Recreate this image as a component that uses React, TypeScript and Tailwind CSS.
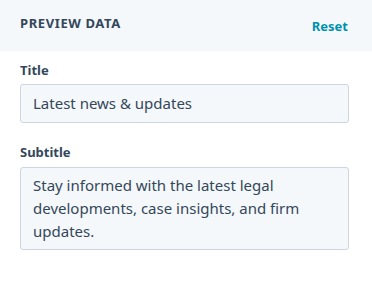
const App = () => {
  return (
    <div className="w-[372px] h-[293px] bg-white text-[#33475b]" style={{ fontFamily: '"Noto Sans", "Liberation Sans", sans-serif' }}>
      <div className="h-[51px] bg-[#f5f8fa] flex justify-between pl-5 pr-[24px]">
        <h3 className="pt-[15px] text-[13px] font-bold uppercase tracking-[0.6px] leading-[16px]">Preview Data</h3>
        <button className="pt-[18px] self-start text-[13px] font-bold text-[#0091ae] leading-[16px]">Reset</button>
      </div>
      <div className="pl-5 pr-[23px] pt-[10px]">
        <label className="block text-[13px] font-bold leading-[18px] mb-[5px]">Title</label>
        <div className="h-[39px] border border-[#cbd6e2] bg-[#f5f8fa] rounded-[3px] px-3 flex items-center text-[15px]">
          Latest news &amp; updates
        </div>
        <label className="block text-[13px] font-bold leading-[18px] mt-[20px] mb-[6px]">Subtitle</label>
        <div className="h-[83px] border border-[#cbd6e2] bg-[#f5f8fa] rounded-[3px] px-3 pt-[6px] text-[15px] leading-[23px]">
          Stay informed with the latest legal developments, case insights, and firm updates.
        </div>
      </div>
    </div>
  );
};

export default App;
